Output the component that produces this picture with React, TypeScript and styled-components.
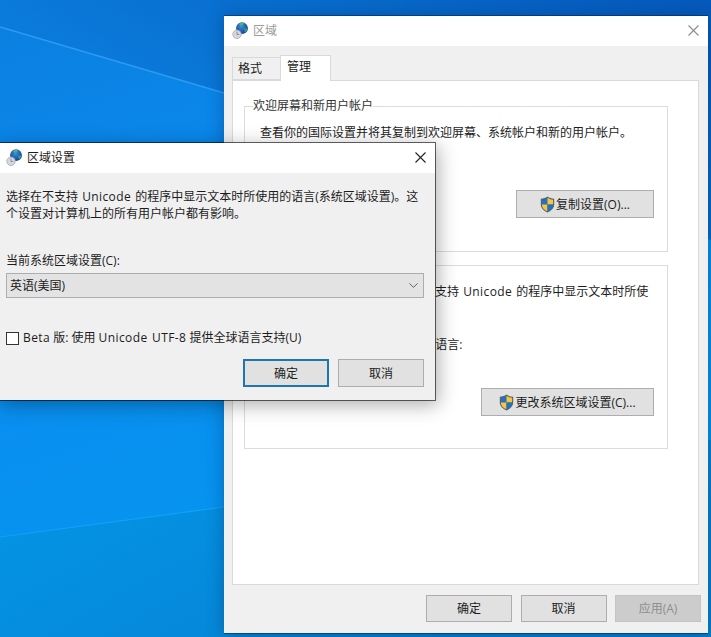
import React from "react";
import styled, { createGlobalStyle } from "styled-components";
import { ChevronDown } from "lucide-react";

const GlobalStyle = createGlobalStyle`
    html, body {
        margin: 0;
        padding: 0;
        background: #0a80e0;
    }
    * {
        box-sizing: border-box;
    }
`;

const Desktop = styled.div`
    position: relative;
    width: 711px;
    height: 637px;
    overflow: hidden;
    font-family: "Open Sans", "Noto Sans CJK SC", sans-serif;
    font-size: 12px;
    line-height: 17px;
    color: #1c1c1c;
`;

const Wallpaper = styled.svg`
    position: absolute;
    inset: 0;
`;

const Window = styled.div`
    position: absolute;
    display: flex;
    flex-direction: column;
    background: #f0f0f0;
    background-clip: padding-box;
`;

const RegionWindow = styled(Window)`
    left: 224px;
    top: 15px;
    width: 484px;
    height: 619px;
    border-top: 1px solid rgba(0, 40, 90, 0.55);
    border-bottom: 1px solid rgba(0, 40, 90, 0.55);
    box-shadow: 0 2px 16px rgba(0, 30, 70, 0.35);
`;

const SettingsDialog = styled(Window)`
    left: -2px;
    top: 142px;
    width: 438px;
    height: 259px;
    border: 1px solid rgba(0, 0, 0, 0.6);
    box-shadow: 2px 4px 18px rgba(0, 0, 0, 0.32);
`;

const TitleBar = styled.div<{ $inactive?: boolean }>`
    display: flex;
    align-items: center;
    flex: none;
    gap: 4px;
    height: 30px;
    padding: 0 0 2px ${(p) => (p.$inactive ? "8px" : "7px")};
    background: #fff;
    color: ${(p) => (p.$inactive ? "#9a9a9a" : "#1c1c1c")};
`;

const CloseButton = styled.div<{ $inactive?: boolean }>`
    display: flex;
    margin-left: auto;
    margin-right: 9px;
    color: ${(p) => (p.$inactive ? "#8c8c8c" : "#222")};
`;

const WindowBody = styled.div`
    flex: 1;
    display: flex;
    flex-direction: column;
    padding: 9px 7px 10px 8px;
`;

const TabRow = styled.div`
    display: flex;
    align-items: flex-end;
    height: 25px;
`;

const Tab = styled.div<{ $active?: boolean }>`
    position: relative;
    width: ${(p) => (p.$active ? "51px" : "48px")};
    height: ${(p) => (p.$active ? "26px" : "23px")};
    margin-bottom: ${(p) => (p.$active ? "-1px" : "0")};
    padding: 2px 0 0 ${(p) => (p.$active ? "6px" : "5px")};
    background: ${(p) => (p.$active ? "#fff" : "#f0f0f0")};
    border: 1px solid #d9d9d9;
    border-bottom: ${(p) => (p.$active ? "none" : "1px solid #d9d9d9")};
    border-right: ${(p) => (p.$active ? "1px solid #d9d9d9" : "none")};
`;

const TabPanel = styled.div`
    display: flex;
    flex-direction: column;
    gap: 5px;
    width: 467px;
    height: 505px;
    margin-bottom: 10px;
    padding: 17px 30px 0 11px;
    background: #fff;
    border: 1px solid #d9d9d9;
`;

const Group = styled.fieldset<{ $height: number }>`
    display: flex;
    flex-direction: column;
    height: ${(p) => p.$height}px;
    min-width: 0;
    margin: 0;
    padding: 10px 13px 0 15px;
    border: 1px solid #dcdcdc;
`;

const GroupTitle = styled.legend`
    margin-left: -7px;
    padding: 0;
    line-height: 16px;
    color: #333;
`;

const GroupText = styled.p<{ $top?: number }>`
    margin: ${(p) => p.$top ?? 0}px 0 0;
    white-space: nowrap;
`;

// Segoe UI runs wider than the installed Latin faces
const Latin = styled.span<{ $spaced?: boolean }>`
    margin: 0 ${(p) => (p.$spaced ? "1px" : "0")};
    letter-spacing: 0.4px;
    word-spacing: 1px;
`;

const PushButton = styled.button<{ $width?: number; $focused?: boolean }>`
    display: flex;
    align-items: center;
    justify-content: center;
    flex: none;
    gap: 1px;
    width: ${(p) => p.$width ?? 86}px;
    height: 28px;
    padding: 0;
    font: inherit;
    color: #1c1c1c;
    background: #e1e1e1;
    border: ${(p) => (p.$focused ? "2px solid #1d76ad" : "1px solid #adadad")};

    &:disabled {
        background: #ccc;
        border-color: #c4c4c4;
        color: #8e8e8e;
    }
`;

const GroupButton = styled(PushButton)<{ $top: number }>`
    margin-top: ${(p) => p.$top}px;
    margin-left: auto;
`;

const ButtonRow = styled.div`
    display: flex;
    justify-content: flex-end;
    gap: 9px;
`;

const FooterRow = styled(ButtonRow)`
    gap: 8.5px;

    button {
        height: 27px;
    }
`;

const DialogBody = styled.div`
    flex: 1;
    display: flex;
    flex-direction: column;
    padding: 15px 11px 0 7px;
`;

const Prompt = styled.p`
    margin: 0;
    white-space: nowrap;
`;

const FieldLabel = styled.label`
    display: block;
    margin-top: 30px;
`;

const LocaleSelect = styled.div`
    display: flex;
    align-items: center;
    justify-content: space-between;
    height: 25px;
    margin-top: 4px;
    padding: 0 2px 0 3px;
    background: #e3e3e3;
    border: 1px solid #adadad;
`;

const CheckRow = styled.label`
    display: flex;
    align-items: center;
    gap: 4px;
    margin-top: 31px;
`;

const CheckBox = styled.span`
    flex: none;
    width: 13px;
    height: 13px;
    margin-top: 1px;
    background: #fff;
    border: 1px solid #333;
`;

const DialogButtons = styled(ButtonRow)`
    margin-top: 13px;
`;

function GlobeIcon() {
    return (
        <svg width="17" height="17" viewBox="0 0 17 17">
            <defs>
                <radialGradient id="globe" cx="0.45" cy="0.35" r="0.75">
                    <stop offset="0" stopColor="#3f8fd8" />
                    <stop offset="0.6" stopColor="#1b58ac" />
                    <stop offset="1" stopColor="#103474" />
                </radialGradient>
            </defs>
            <circle cx="10" cy="6.2" r="5.9" fill="url(#globe)" />
            <path d="M7 2.2 C8.4 .6 10.6 .1 12.2 .7 C12 2.2 10.8 2.8 10 3.8 C8.8 4 7.8 3.2 7 2.2Z" fill="#4fb27a" />
            <path d="M12 6.4 C13.2 6.2 14.8 6.6 15.7 7.2 C15.2 8.6 14.2 9.8 13 10.4 C12.6 9 12 7.8 12 6.4Z" fill="#3d8f8c" />
            <circle cx="5" cy="12.3" r="4.2" fill="#d5d8dc" stroke="#a3a8ad" strokeWidth="0.8" />
            <path d="M5 9.6 V12.5 H7.2" fill="none" stroke="#777d82" strokeWidth="0.8" />
        </svg>
    );
}

function ShieldIcon() {
    return (
        <svg width="15" height="17" viewBox="0 0 15 17">
            <path d="M7.5 0.6 C5.6 2 3.4 2.7 0.8 2.8 V8.6 C0.8 12 3.6 15 7.5 16.4 C11.4 15 14.2 12 14.2 8.6 V2.8 C11.6 2.7 9.4 2 7.5 0.6Z" fill="#56606c" />
            <path d="M7.5 1.8 C5.8 3 3.9 3.6 1.9 3.8 V8.4 H7.5Z" fill="#1f72c8" />
            <path d="M7.5 1.8 C9.2 3 11.1 3.6 13.1 3.8 V8.4 H7.5Z" fill="#f6c63c" />
            <path d="M1.9 8.4 H7.5 V15.2 C4.4 14 1.9 11.6 1.9 8.4Z" fill="#f6c63c" />
            <path d="M13.1 8.4 H7.5 V15.2 C10.6 14 13.1 11.6 13.1 8.4Z" fill="#1f72c8" />
        </svg>
    );
}

function CloseIcon() {
    return (
        <svg width="11" height="11" viewBox="0 0 11 11">
            <path d="M0.5 0.5 L10.5 10.5 M10.5 0.5 L0.5 10.5" stroke="currentColor" strokeWidth="1.1" fill="none" />
        </svg>
    );
}

export default function App() {
    return (
        <Desktop>
            <GlobalStyle />
            <Wallpaper width="711" height="637" viewBox="0 0 711 637">
                <defs>
                    <linearGradient id="sky" x1="0" y1="0" x2="0.35" y2="1">
                        <stop offset="0" stopColor="#0b7fe0" />
                        <stop offset="0.45" stopColor="#0a8cf0" />
                        <stop offset="1" stopColor="#0497ee" />
                    </linearGradient>
                    <linearGradient id="upper" x1="0" y1="0.6" x2="1" y2="0">
                        <stop offset="0" stopColor="#0c85e4" />
                        <stop offset="1" stopColor="#0559bb" />
                    </linearGradient>
                    <linearGradient id="lower" x1="0" y1="0" x2="1" y2="0.5">
                        <stop offset="0" stopColor="#0497e8" />
                        <stop offset="1" stopColor="#0680d2" />
                    </linearGradient>
                </defs>
                <rect width="711" height="637" fill="url(#sky)" />
                <polygon points="0,0 711,0 711,240 224,93 0,27" fill="url(#upper)" />
                <polygon points="0,537 224,507 711,440 711,637 0,637" fill="url(#lower)" />
                <line x1="0" y1="27" x2="224" y2="93" stroke="#2c9cf2" strokeWidth="1.4" />
                <line x1="0" y1="537" x2="224" y2="507" stroke="#10a2f8" strokeWidth="1.2" />
            </Wallpaper>

            <RegionWindow>
                <TitleBar $inactive>
                    <GlobeIcon />
                    <span>区域</span>
                    <CloseButton $inactive>
                        <CloseIcon />
                    </CloseButton>
                </TitleBar>
                <WindowBody>
                    <TabRow>
                        <Tab>格式</Tab>
                        <Tab $active>管理</Tab>
                    </TabRow>
                    <TabPanel>
                        <Group $height={154}>
                            <GroupTitle>欢迎屏幕和新用户帐户</GroupTitle>
                            <GroupText>查看你的国际设置并将其复制到欢迎屏幕、系统帐户和新的用户帐户。</GroupText>
                            <GroupButton $width={138} $top={49}>
                                <ShieldIcon />
                                复制设置(O)...
                            </GroupButton>
                        </Group>
                        <Group $height={192}>
                            <GroupTitle>
                                非 <Latin>Unicode</Latin> 程序的语言
                            </GroupTitle>
                            <GroupText>
                                语言设置(系统区域设置)控制在不支持 <Latin $spaced>Unicode</Latin> 的程序中显示文本时所使
                                <br />
                                用的语言。
                            </GroupText>
                            <GroupText $top={19}>
                                当前用于所有非 <Latin>Unicode</Latin> 程序的语言:
                            </GroupText>
                            <GroupButton $width={173} $top={35}>
                                <ShieldIcon />
                                更改系统区域设置(C)...
                            </GroupButton>
                        </Group>
                    </TabPanel>
                    <FooterRow>
                        <PushButton>确定</PushButton>
                        <PushButton>取消</PushButton>
                        <PushButton disabled>应用(A)</PushButton>
                    </FooterRow>
                </WindowBody>
            </RegionWindow>

            <SettingsDialog>
                <TitleBar>
                    <GlobeIcon />
                    <span>区域设置</span>
                    <CloseButton>
                        <CloseIcon />
                    </CloseButton>
                </TitleBar>
                <DialogBody>
                    <Prompt>
                        选择在不支持 <Latin $spaced>Unicode</Latin> 的程序中显示文本时所使用的语言(系统区域设置)。这
                        <br />
                        个设置对计算机上的所有用户帐户都有影响。
                    </Prompt>
                    <FieldLabel>当前系统区域设置(C):</FieldLabel>
                    <LocaleSelect>
                        <span>英语(美国)</span>
                        <ChevronDown size={15} strokeWidth={1.2} color="#333" />
                    </LocaleSelect>
                    <CheckRow>
                        <CheckBox />
                        <span>
                            <Latin>Beta</Latin> 版: 使用 <Latin>Unicode UTF-8</Latin> 提供全球语言支持(U)
                        </span>
                    </CheckRow>
                    <DialogButtons>
                        <PushButton $focused>确定</PushButton>
                        <PushButton>取消</PushButton>
                    </DialogButtons>
                </DialogBody>
            </SettingsDialog>
        </Desktop>
    );
}
